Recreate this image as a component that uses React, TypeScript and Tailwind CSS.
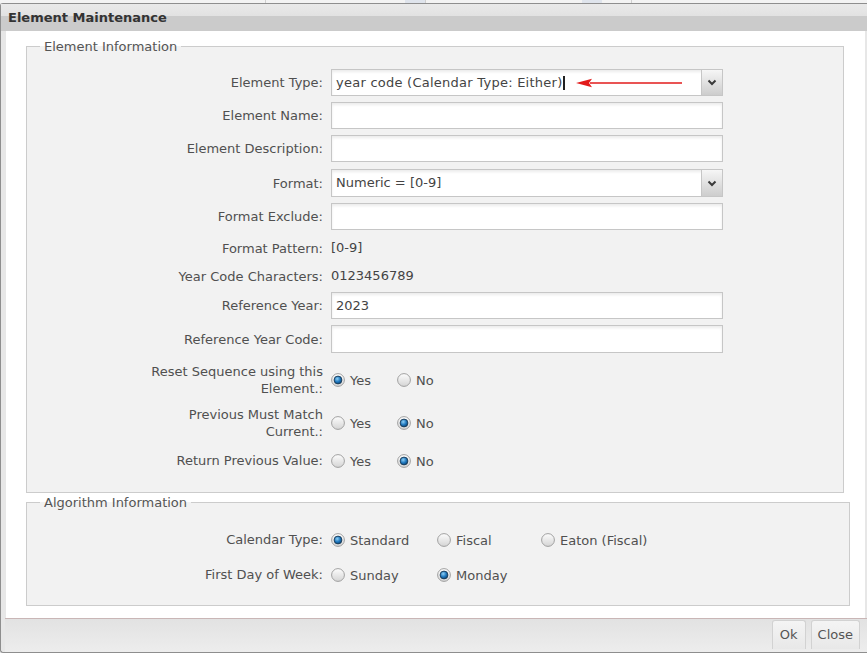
import React, { useId } from 'react';

const Radio = ({ checked }: { checked?: boolean }) => {
  const id = useId().replace(/:/g, '');
  return (
    <svg width="14" height="14" viewBox="0 0 14 14" className="shrink-0">
      <defs>
        <linearGradient id={`o${id}`} x1="0" y1="0" x2="0" y2="1">
          <stop offset="0" stopColor="#fdfdfd" />
          <stop offset="1" stopColor="#d4d4d4" />
        </linearGradient>
        <radialGradient id={`i${id}`} cx="0.4" cy="0.35" r="0.7">
          <stop offset="0" stopColor="#8fd0f5" />
          <stop offset="0.55" stopColor="#1f78bf" />
          <stop offset="1" stopColor="#0b4372" />
        </radialGradient>
      </defs>
      <circle cx="7" cy="7" r="6.4" fill={`url(#o${id})`} stroke="#a0a0a0" strokeWidth="1" />
      {checked && <circle cx="7" cy="7" r="3.9" fill={`url(#i${id})`} stroke="#1b3a55" strokeWidth="0.9" />}
    </svg>
  );
};

const Option = ({ label, checked, width }: { label: string; checked?: boolean; width?: string }) => (
  <div className={`flex items-center gap-[5px] ${width ?? ''}`}>
    <Radio checked={checked} />
    <span className="pt-[2px]">{label}</span>
  </div>
);

const TextBox = ({ value }: { value?: string }) => (
  <div className="h-full w-[392px] border border-[#c6c6c6] bg-white shadow-[inset_0_2px_3px_rgba(0,0,0,0.08)] px-[4px] flex items-center text-[#444]">
    {value}
  </div>
);

const SelectBox = ({ children }: { children: React.ReactNode }) => (
  <div className="h-full w-[392px] border border-[#c6c6c6] bg-white shadow-[inset_0_2px_3px_rgba(0,0,0,0.08)] flex items-stretch text-[#444]">
    <div className="flex-1 flex items-center pl-[4px]">{children}</div>
    <div className="w-[21px] border-l border-[#c6c6c6] bg-gradient-to-b from-[#f6f6f6] to-[#cdcdcd] flex items-center justify-center">
      <svg width="10" height="7" viewBox="0 0 10 7">
        <path d="M1.5 1.5 L5 5 L8.5 1.5" fill="none" stroke="#3a3a3a" strokeWidth="2" />
      </svg>
    </div>
  </div>
);

const Row = ({ label, className, children }: { label: React.ReactNode; className: string; children?: React.ReactNode }) => (
  <div className={`flex items-center ${className}`}>
    <div className="w-[283px] text-right leading-[17px]">{label}</div>
    <div className="ml-[8px] h-full flex items-center">{children}</div>
  </div>
);

export default function App() {
  return (
    <div className="w-[867px] h-[653px] overflow-hidden bg-[#f3f3f3] font-['DejaVu_Sans',sans-serif] text-[13px] text-[#505050]">
      {/* page behind the dialog */}
      <div className="h-[3px] flex">
        <div className="w-[265px]" />
        <div className="w-[140px] border-l border-[#cfcfcf]" />
        <div className="w-[20px] bg-[#dfe4ec]" />
        <div className="w-[157px] border-l border-[#cfcfcf]" />
        <div className="w-[20px] bg-[#dfe4ec]" />
        <div className="w-[30px] border-r border-[#cfcfcf]" />
      </div>

      <div className="h-[650px] flex flex-col border-t border-l border-b border-[#8e8e8e] rounded-tl-[3px] rounded-bl-[3px] bg-[#e7e7e7]">
        <div className="h-[27px] shrink-0 bg-[linear-gradient(#e9e9e9_0%,#e2e2e2_44%,#cbcbcb_45%,#cbcbcb_100%)] flex items-center pl-[7px] font-bold text-[#333] pt-[1px]">
          Element Maintenance
        </div>

        <div className="flex-1 ml-[5px] mr-[2px] bg-white pt-[7px] pb-[9px]">
          <fieldset className="ml-[20px] w-[818px] border border-[#cccccc] bg-[#f2f2f2] pl-[13px] pt-[14px] pb-[23px]">
            <legend className="px-[4px] leading-[17px] text-[#555]">Element Information</legend>
            <div className="flex flex-col gap-[6px]">
              <Row label="Element Type:" className="h-[27px]">
                <SelectBox>
                  <span className="tracking-[0.25px]">year code (Calendar Type: Either)</span>
                  <span className="w-[2px] h-[14px] bg-[#222] ml-[1px]" />
                  <svg width="110" height="10" viewBox="0 0 110 10" className="ml-[11px]">
                    <path d="M14 5 L106 5" stroke="#e21b1b" strokeWidth="1.6" />
                    <path d="M0 5 L16 0.8 L13 5 L16 9.2 Z" fill="#e21b1b" />
                  </svg>
                </SelectBox>
              </Row>
              <Row label="Element Name:" className="h-[27px]">
                <TextBox />
              </Row>
              <Row label="Element Description:" className="h-[27px]">
                <TextBox />
              </Row>
              <Row label="Format:" className="h-[28px] mt-[1px]">
                <SelectBox>
                  <span>Numeric = [0-9]</span>
                </SelectBox>
              </Row>
              <Row label="Format Exclude:" className="h-[27px]">
                <TextBox />
              </Row>
              <Row label="Format Pattern:" className="h-[24px]">
                <span className="text-[#444]">[0-9]</span>
              </Row>
              <Row label="Year Code Characters:" className="h-[20px]">
                <span className="text-[#444]">0123456789</span>
              </Row>
              <Row label="Reference Year:" className="h-[27px]">
                <TextBox value="2023" />
              </Row>
              <Row label="Reference Year Code:" className="h-[28px]">
                <TextBox />
              </Row>
              <Row
                label={
                  <>
                    Reset Sequence using this
                    <br />
                    Element.:
                  </>
                }
                className="h-[34px] mt-[4px]"
              >
                <Option label="Yes" checked width="w-[66px]" />
                <Option label="No" />
              </Row>
              <Row
                label={
                  <>
                    Previous Must Match
                    <br />
                    Current.:
                  </>
                }
                className="h-[34px] mt-[3px]"
              >
                <Option label="Yes" width="w-[66px]" />
                <Option label="No" checked />
              </Row>
              <Row label="Return Previous Value:" className="h-[17px] mt-[6px]">
                <Option label="Yes" width="w-[66px]" />
                <Option label="No" checked />
              </Row>
            </div>
          </fieldset>

          <fieldset className="ml-[20px] mt-[1px] w-[824px] border border-[#cccccc] bg-[#f2f2f2] pl-[13px] pt-[20px] pb-[22px]">
            <legend className="px-[4px] leading-[17px] text-[#555]">Algorithm Information</legend>
            <div className="flex flex-col gap-[18px]">
              <Row label="Calendar Type:" className="h-[17px]">
                <Option label="Standard" checked width="w-[106px]" />
                <Option label="Fiscal" width="w-[104px]" />
                <Option label="Eaton (Fiscal)" />
              </Row>
              <Row label="First Day of Week:" className="h-[17px]">
                <Option label="Sunday" width="w-[106px]" />
                <Option label="Monday" checked />
              </Row>
            </div>
          </fieldset>
        </div>

        <div className="h-[34px] shrink-0 ml-[4px] border-t border-[#c9b6b6] bg-gradient-to-b from-[#e2e2e2] to-[#ededed] flex justify-end items-start gap-[5px] pr-[7px] pt-[1px]">
          <button className="h-[29px] px-[7px] border border-b-0 border-[#d2d2d2] rounded-t-[3px] bg-gradient-to-b from-[#f4f4f4] to-[#e8e8e8] text-[#555]">
            Ok
          </button>
          <button className="h-[29px] px-[6px] border border-b-0 border-[#d2d2d2] rounded-t-[3px] bg-gradient-to-b from-[#f4f4f4] to-[#e8e8e8] text-[#555]">
            Close
          </button>
        </div>
      </div>
    </div>
  );
}
